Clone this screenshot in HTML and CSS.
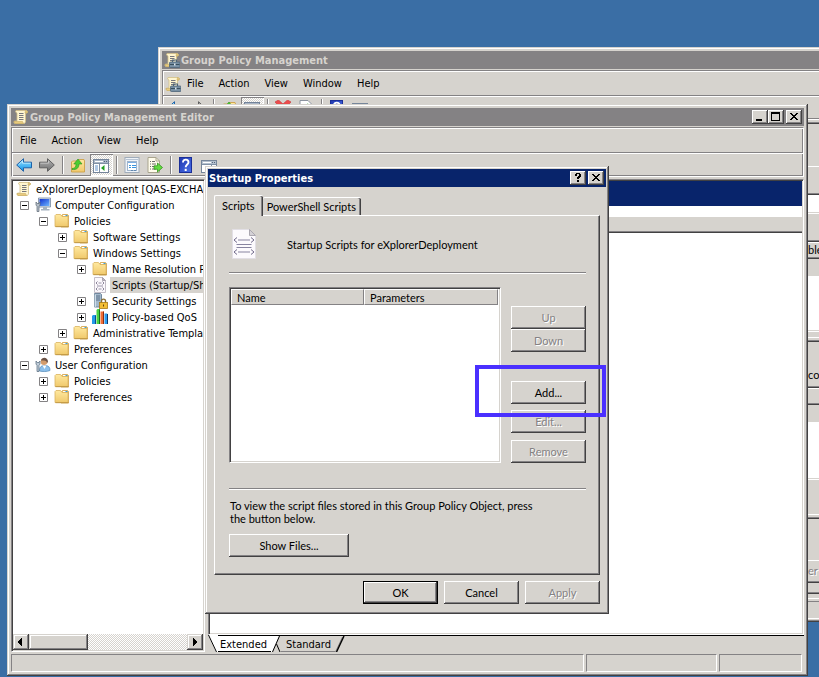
FILE: index.html
```html
<!DOCTYPE html>
<html lang="en">
<head>
<meta charset="utf-8">
<title>Group Policy Management Editor</title>
<link rel="stylesheet" href="styles.css">
</head>
<body>
<svg class="sprite" aria-hidden="true">
  <defs>
    <linearGradient id="gFolder" x1="0" y1="0" x2="0" y2="1"><stop offset="0" stop-color="#ffe9a0"/><stop offset="1" stop-color="#f0c96c"/></linearGradient>
    <linearGradient id="gHelp" x1="0" y1="0" x2="1" y2="1"><stop offset="0" stop-color="#2038b0"/><stop offset="1" stop-color="#4a70e8"/></linearGradient>
    <linearGradient id="gBlue" x1="0" y1="0" x2="0" y2="1"><stop offset="0" stop-color="#9be0ff"/><stop offset="1" stop-color="#0c96ea"/></linearGradient>
    <linearGradient id="gGrey" x1="0" y1="0" x2="0" y2="1"><stop offset="0" stop-color="#b4b4b4"/><stop offset="1" stop-color="#6e6e6e"/></linearGradient>
    <linearGradient id="gScreen" x1="0" y1="0" x2="1" y2="1"><stop offset="0" stop-color="#1030d0"/><stop offset="1" stop-color="#70b8ff"/></linearGradient>
  </defs>
  <symbol id="scroll" viewBox="0 0 16 16">
    <path d="M3 1.500h10.500l1 1-.5 1.500h-1.500V13l-1 1.500H2L.8 13.500l.7-1.500H4V4L2.500 3z" fill="#fff6d0" stroke="#d3c088" stroke-width=".8"/>
    <path d="M12.500 1.500l2 1-.5 1.500h-2zM1 12.500h8.500l1 2H2z" fill="#eacb80" stroke="#c8ac60" stroke-width=".6"/>
    <path d="M6 4.500h4.500M6 6.500h4.500M6 8.500h4.500M6 10.500h4.500" stroke="#77777c"/>
  </symbol>
  <symbol id="scrollcase" viewBox="0 0 16 16">
    <use href="#scroll"/>
    <path d="M8.500 10V8h4v2" fill="none" stroke="#4c6478" stroke-width="1.200"/>
    <rect x="5.500" y="10" width="10.500" height="5.500" rx=".8" fill="#7890a4" stroke="#4c6478" stroke-width=".8"/>
    <path d="M6 12.500h9.500" stroke="#38505f"/><path d="M10 11.500h1.500v2H10z" fill="#dce6ec"/>
  </symbol>
  <symbol id="back" viewBox="0 0 16 16"><path d="M.7 8L7.500 1.700v3.500h8v5.600h-8v3.500z" fill="url(#gBlue)" stroke="#1e62a8"/><path d="M2.500 7.800L6.500 4v2.200h8" fill="none" stroke="#c8f0ff" stroke-width=".8"/></symbol>
  <symbol id="fwd" viewBox="0 0 16 16"><path d="M15.300 8L8.500 1.700v3.500h-8v5.600h8v3.500z" fill="url(#gGrey)" stroke="#606060"/><path d="M1.500 6.200h8V4" fill="none" stroke="#ccc" stroke-width=".8"/></symbol>
  <symbol id="folder" viewBox="0 0 16 16">
    <path d="M7 3.500L8.500 1.500h5l1 1V14H7z" fill="#f0c868" stroke="#d0a24c" stroke-width=".8"/>
    <path d="M1 13.500v-11l1-1h4.500l1.500 2h6v10z" fill="url(#gFolder)" stroke="#d9b360" stroke-width=".8"/>
    <path d="M9 2.500h3" stroke="#fff"/><path d="M11.500 2.500h2" stroke="#3aa0e0"/>
    <path d="M1.500 13.700h13" stroke="#b88d38" stroke-width=".8"/>
  </symbol>
  <symbol id="upfolder" viewBox="0 0 16 16">
    <path d="M1.500 15V5l1-1h5l1-1.500h5.500l.5 1.500v11z" fill="url(#gFolder)" stroke="#cda048" stroke-width=".9"/>
    <path d="M2 11.500c3 0 4-1.500 4-4.500H3.800L8 2l4 5H9c0 4-2.500 6-7 5.500z" fill="#4ccc30" stroke="#2c9020" stroke-width=".6"/>
  </symbol>
  <symbol id="pane" viewBox="0 0 16 16">
    <rect x=".5" y="2.500" width="15" height="13" fill="#fff" stroke="#74849a"/><path d="M1 3h14v3H1z" fill="#aab6c6"/>
    <path d="M2 4.500h8" stroke="#fff"/><path d="M11 4.500h4" stroke="#54647c" stroke-dasharray="1 1"/><path d="M1 6.500h14M6.500 7v8" stroke="#8090a4"/>
    <path d="M2 9h3M2 11h3M2 13h3" stroke="#6090c8"/><path d="M11.500 8v6L8 11z" fill="#22a022"/>
  </symbol>
  <symbol id="props" viewBox="0 0 16 16">
    <rect x="1" y=".5" width="14" height="15" fill="#eef3f8" stroke="#a0acba"/><path d="M2 2.500h12" stroke="#b8c4d4"/>
    <rect x="3.500" y="4.500" width="9" height="9" fill="#fff" stroke="#a0b4cc"/><path d="M4 5.500h8" stroke="#7cb0e4"/><path d="M5 8.500h2M8 8.500h4M5 10.500h2M8 10.500h4" stroke="#3794e0"/><path d="M7 13.500h2M10 13.500h2" stroke="#6088b0"/>
  </symbol>
  <symbol id="export" viewBox="0 0 16 16">
    <path d="M1 .5h8l3.500 3.500v11.500H1z" fill="#fffceb" stroke="#a9a48e"/><path d="M9 .5V4h3.500" fill="none" stroke="#a9a48e"/>
    <path d="M3 4.500h1M5 4.500h3M3 7h1M5 7h4M3 9.500h1M5 9.500h3M3 12h1M5 12h4" stroke="#6c6c6c"/>
    <path d="M7 8.800h3.500V6l5 4.500-5 4.500v-2.800H7z" fill="#62dc40" stroke="#35901f" stroke-width=".8"/>
  </symbol>
  <symbol id="help" viewBox="0 0 16 16"><rect x="1.500" y=".5" width="12" height="15" fill="url(#gHelp)" stroke="#1b2f98"/><path d="M5 5.500C5 1.500 10.500 2 10.500 5.200 10.500 7.500 7.700 7.600 7.700 10.300" fill="none" stroke="#fff" stroke-width="1.900"/><path d="M6.700 11.800h2V14h-2z" fill="#fff"/></symbol>
  <symbol id="win" viewBox="0 0 16 16"><rect x=".5" y="3.500" width="15" height="12" fill="#fff" stroke="#76869a"/><path d="M1 4h14v3H1z" fill="#b4c0ce"/><path d="M2 5.500h8" stroke="#fff"/><path d="M11 5.500h4" stroke="#54647c" stroke-dasharray="1 1"/><path d="M1 7.500h14M10.500 8v7" stroke="#8090a4"/><path d="M12 9.500h2M12 11.500h2M12 13.500h2" stroke="#6090c8"/></symbol>
  <symbol id="del" viewBox="0 0 16 16"><path d="M0 2l3.500-2L8 4l4.500-4L16 2l-5 5.500L15.500 13l-3 2L8 10.500 3.500 15l-3-2L5 7.500z" fill="#ec4c4c" stroke="#c84040" stroke-width=".7"/></symbol>
  <symbol id="refresh" viewBox="0 0 16 16"><path d="M2 .5h8l3.500 3.500v11.500H2z" fill="#fff" stroke="#8c94a0"/><path d="M4.500 8c0-3 3-4.500 5-3V3l3 3.500-4.500 1.500V7C6.500 6 6 7 6 9z" fill="#44b83a"/></symbol>
  <symbol id="computer" viewBox="0 0 16 16">
    <path d="M3.500 1h12v9h-12z" fill="#dfe6ee" stroke="#7488a0" stroke-width=".8"/><path d="M4.500 2h10v7h-10z" fill="url(#gScreen)"/><path d="M8 10h4v2h2.500v1.500H6V12h2z" fill="#a5b2c0"/>
    <path d="M1 5v3l1 1.500v5h2v-5L5 8V5L4 6.500H2.200z" fill="#b4bec8" stroke="#5c6874" stroke-width=".7"/>
  </symbol>
  <symbol id="user" viewBox="0 0 16 16">
    <path d="M4.500 14c0-4.500 2-5.500 5.500-5.500s5 1.500 5 5c-3 1.300-7.500 1.300-10.500.5z" fill="#8cc0ec" stroke="#5088b8" stroke-width=".7"/><path d="M7.500 8.500L9.500 12l2-3.500z" fill="#fff"/>
    <circle cx="9" cy="4.700" r="3.300" fill="#d39c6c"/><path d="M6 3.500C6.500 0 12.500-.5 13 4.500l-1 2c0-2-1-3-3-3z" fill="#6c5448"/>
    <path d="M1 4v3l1 1.500v6h2V8.500L5 7V4L4 5.500H2.200z" fill="#c0ccd8" stroke="#53687c" stroke-width=".7"/>
  </symbol>
  <symbol id="script" viewBox="0 0 24 30">
    <path d="M.5.500h17l6 6v23H.5z" fill="#fcfafd" stroke="#e2dfe5"/><path d="M17.500.500v6h6z" fill="#d4d1d6" stroke="#aaa7b0"/>
    <path d="M6 11h12M6 23h12" stroke="#8884a0"/><path d="M5 8.500L2 11l3 2.500M19 8.500l3 2.500-3 2.500M5 20.500L2 23l3 2.500M19 20.500l3 2.500-3 2.500" fill="none" stroke="#716b8b"/>
    <path d="M4.500 15.500h15M4.500 18.500h15" stroke="#8884a0"/>
  </symbol>
  <symbol id="scriptsm" viewBox="0 0 16 16">
    <path d="M2.500.500h8l3 3v12h-11z" fill="#fbf8fc" stroke="#c4bec8"/><path d="M10.500.500v3h3z" fill="#bbb6c0" stroke="#a9a3ae"/>
    <path d="M6.500 6h3M6.500 12h3M5 9h6" stroke="#9a94a8"/><path d="M5.500 4.500L4 6l1.500 1.500M10.500 4.500L12 6l-1.500 1.500M5.500 10.500L4 12l1.500 1.500M10.500 10.500L12 12l-1.500 1.500" fill="none" stroke="#7f788f" stroke-width=".9"/>
  </symbol>
  <symbol id="security" viewBox="0 0 16 16">
    <path d="M2.500.500h6l1 1V14h-7z" fill="#a3b8cb" stroke="#667f96" stroke-width=".9"/><path d="M4 3h4M4 5h4M4 7h4" stroke="#5a7088"/><path d="M3.200 1.500V14" stroke="#e3edf5"/>
    <path d="M9.500 10V8c0-2.500 4-2.500 4 0v2" fill="none" stroke="#8c7030" stroke-width="1.400"/><rect x="7.500" y="9.500" width="8" height="6" fill="#f3bd32" stroke="#a87916" stroke-width=".8"/><path d="M11 11.500h1v2h-1z" fill="#60420a"/>
  </symbol>
  <symbol id="qos" viewBox="0 0 16 16">
    <path d="M0 7l1-1h3v9H0z" fill="#239be8"/><path d="M3 6.500h1V15H3z" fill="#0a4a90"/><path d="M4.500 1l1-1H8v15H4.500z" fill="#49d344"/><path d="M7 .5h1V15H7z" fill="#157024"/><path d="M8.500 2.500H12V15H8.500z" fill="#ee6c35"/><path d="M11 2.500h1V15h-1z" fill="#8b2b13"/><path d="M12.500 4.500H15l1 1V15h-3.500z" fill="#2a9cf0"/><path d="M15 5h1v10h-1z" fill="#0a3a70"/>
  </symbol>
  <symbol id="plus" viewBox="0 0 9 9"><path d="M.5.500h8v8h-8z" fill="#fff" stroke="#848284"/><path d="M2 4.500h5M4.500 2v5" stroke="#000"/></symbol>
  <symbol id="minus" viewBox="0 0 9 9"><path d="M.5.500h8v8h-8z" fill="#fff" stroke="#848284"/><path d="M2 4.500h5" stroke="#000"/></symbol>
  <symbol id="close" viewBox="0 0 12 10"><path d="M2 1h2v1h1v1h2V2h1V1h2v1H9v1H8v1H7v1h1v1h1v1h1v1H8V7H7V6H5v1H4v1H2V7h1V6h1V5h1V4H4V3H3V2H2z" fill="#000"/></symbol>
</svg>

<main class="desktop">
  <section class="window console" aria-label="Group Policy Management">
    <header class="titlebar"><svg class="ic"><use href="#scrollcase"/></svg><h2>Group Policy Management</h2></header>
    <div class="bars">
      <nav class="menu"><svg class="ic"><use href="#scrollcase"/></svg><button>File</button><button>Action</button><button>View</button><button>Window</button><button>Help</button></nav>
      <div class="toolbar">
        <button aria-label="Back"><svg class="ic"><use href="#back"/></svg></button><button aria-label="Forward"><svg class="ic"><use href="#fwd"/></svg></button><span class="sep"></span>
        <button aria-label="Up"><svg class="ic"><use href="#upfolder"/></svg></button><button class="pressed" aria-label="Show tree"><svg class="ic"><use href="#pane"/></svg></button><span class="sep"></span>
        <button aria-label="Delete"><svg class="ic"><use href="#del"/></svg></button><button aria-label="Refresh"><svg class="ic"><use href="#refresh"/></svg></button><span class="sep"></span>
        <button aria-label="Help"><svg class="ic"><use href="#help"/></svg></button><button aria-label="New window"><svg class="ic"><use href="#win"/></svg></button>
      </div>
    </div>
    <div class="results">
      <i class="dk"></i><i></i><i class="lt"></i><i></i><i class="dk"></i><i class="paper"></i><i></i><i class="lt"></i><i></i>
      <i class="dk"></i><i class="lt"></i><span>ble</span><i class="dk"></i><i></i><i class="paper"></i><i></i><i class="lt"></i><i></i><i class="lt"></i><i></i>
      <i class="dk"></i><i></i><span>cor</span><i class="dk"></i><i class="lt"></i><i></i><i class="dk"></i><i></i><i class="paper"></i><i></i><i class="lt"></i><i></i><i class="lt"></i><i></i>
      <i class="dk"></i><i></i><i class="lt"></i><span class="off">er</span><i class="dk"></i><i></i><i class="dk"></i><i></i><i class="lt"></i><i></i><i class="gr"></i><i></i><i class="lt"></i>
    </div>
  </section>

  <section class="window editor" aria-label="Group Policy Management Editor">
    <header class="titlebar"><svg class="ic"><use href="#scroll"/></svg><h2>Group Policy Management Editor</h2>
      <span class="caption">
        <button aria-label="Minimize"><svg viewBox="0 0 12 10"><path d="M2 7h6v2H2z"/></svg></button><button aria-label="Maximize"><svg viewBox="0 0 12 10"><path d="M1 0h9v9H1zM2 2v6h7V2z" fill-rule="evenodd"/></svg></button>
        <button class="x" aria-label="Close"><svg><use href="#close"/></svg></button>
      </span>
    </header>
    <div class="bars">
      <nav class="menu"><button>File</button><button>Action</button><button>View</button><button>Help</button></nav>
      <div class="toolbar">
        <button aria-label="Back"><svg class="ic"><use href="#back"/></svg></button><button aria-label="Forward"><svg class="ic"><use href="#fwd"/></svg></button><span class="sep"></span>
        <button aria-label="Up"><svg class="ic"><use href="#upfolder"/></svg></button><button class="pressed" aria-label="Show tree"><svg class="ic"><use href="#pane"/></svg></button><span class="sep"></span>
        <button aria-label="Properties"><svg class="ic"><use href="#props"/></svg></button><button aria-label="Export"><svg class="ic"><use href="#export"/></svg></button><span class="sep"></span>
        <button aria-label="Help"><svg class="ic"><use href="#help"/></svg></button><button aria-label="New window"><svg class="ic"><use href="#win"/></svg></button>
      </div>
    </div>
    <div class="panes">
      <div class="treepane">
        <ul class="tree">
          <li><div class="row root"><svg class="ic"><use href="#scroll"/></svg><span>eXplorerDeployment [QAS-EXCHANGE]</span></div></li>
          <li><div class="row"><svg class="ex"><use href="#minus"/></svg><svg class="ic"><use href="#computer"/></svg><span>Computer Configuration</span></div>
            <ul>
              <li><div class="row"><svg class="ex"><use href="#minus"/></svg><svg class="ic"><use href="#folder"/></svg><span>Policies</span></div>
                <ul>
                  <li><div class="row"><svg class="ex"><use href="#plus"/></svg><svg class="ic"><use href="#folder"/></svg><span>Software Settings</span></div></li>
                  <li><div class="row"><svg class="ex"><use href="#minus"/></svg><svg class="ic"><use href="#folder"/></svg><span>Windows Settings</span></div>
                    <ul>
                      <li><div class="row"><svg class="ex"><use href="#plus"/></svg><svg class="ic"><use href="#folder"/></svg><span>Name Resolution Policy</span></div></li>
                      <li><div class="row picked"><svg class="ex"></svg><svg class="ic"><use href="#scriptsm"/></svg><span>Scripts (Startup/Shutdown)</span></div></li>
                      <li><div class="row"><svg class="ex"><use href="#plus"/></svg><svg class="ic"><use href="#security"/></svg><span>Security Settings</span></div></li>
                      <li><div class="row"><svg class="ex"><use href="#plus"/></svg><svg class="ic"><use href="#qos"/></svg><span>Policy-based QoS</span></div></li>
                    </ul></li>
                  <li><div class="row"><svg class="ex"><use href="#plus"/></svg><svg class="ic"><use href="#folder"/></svg><span>Administrative Templates</span></div></li>
                </ul></li>
              <li><div class="row"><svg class="ex"><use href="#plus"/></svg><svg class="ic"><use href="#folder"/></svg><span>Preferences</span></div></li>
            </ul></li>
          <li><div class="row"><svg class="ex"><use href="#minus"/></svg><svg class="ic"><use href="#user"/></svg><span>User Configuration</span></div>
            <ul>
              <li><div class="row"><svg class="ex"><use href="#plus"/></svg><svg class="ic"><use href="#folder"/></svg><span>Policies</span></div></li>
              <li><div class="row"><svg class="ex"><use href="#plus"/></svg><svg class="ic"><use href="#folder"/></svg><span>Preferences</span></div></li>
            </ul></li>
        </ul>
        <div class="scroll">
          <button aria-label="Scroll left"><svg viewBox="0 0 12 12"><path d="M7 2v8H6V9H5V8H4V7H3V5h1V4h1V3h1V2z"/></svg></button><span class="thumb"></span><span class="track"></span><button aria-label="Scroll right"><svg viewBox="0 0 12 12"><path d="M4 2v8h1V9h1V8h1V7h1V5H7V4H6V3H5V2z"/></svg></button>
        </div>
      </div>
      <div class="detail">
        <div class="sheet"><div class="band"></div><div class="heads"></div></div>
        <div class="views">
          <svg class="slant first" viewBox="0 0 10 17"><path d="M0 0h10v17H8z" fill="#fff"/><path d="M.5 0L8.500 17" stroke="#000"/></svg>
          <button class="on">Extended</button>
          <svg class="slant" viewBox="0 0 10 16"><path d="M0 0h8L1 16H0z" fill="#fff"/><path d="M8.500 0l-7 16M5.500 8l3.500 8" stroke="#000" fill="none"/></svg>
          <button class="other">Standard</button>
          <svg class="slant" viewBox="0 0 10 16"><path d="M7.500 1L.5 16" stroke="#848284"/><path d="M9 0L1.500 16" stroke="#000" stroke-width="1.400"/></svg>
        </div>
      </div>
    </div>
    <footer class="status"><span></span><span></span><span></span></footer>
  </section>

  <section class="window dialog" role="dialog" aria-label="Startup Properties">
    <header class="titlebar active"><h2>Startup Properties</h2>
      <span class="caption">
        <button aria-label="Help"><svg viewBox="0 0 12 10"><path d="M3 1h1V0h4v1h1v3H8v1H7v1H5V4h1V3h1V1H5v2H3zM5 7h2v2H5z"/></svg></button>
        <button class="x" aria-label="Close"><svg><use href="#close"/></svg></button>
      </span>
    </header>
    <div class="body">
      <div class="tabs"><button class="tab on">Scripts</button><button class="tab">PowerShell Scripts</button></div>
      <div class="page">
        <div class="intro"><svg class="big"><use href="#script"/></svg><span>Startup Scripts for eXplorerDeployment</span></div>
        <hr>
        <div class="pick">
          <div class="list"><table><thead><tr><th>Name</th><th>Parameters</th></tr></thead></table></div>
          <div class="side">
            <button class="btn" disabled>Up</button><button class="btn" disabled>Down</button>
            <div class="marked"><button class="btn">Add...</button><span class="marker"></span></div>
            <button class="btn edit" disabled>Edit...</button><button class="btn remove" disabled>Remove</button>
          </div>
        </div>
        <hr>
        <p>To view the script files stored in this Group Policy Object, press<br>the button below.</p>
        <button class="btn wide">Show Files...</button>
      </div>
      <div class="actions"><button class="btn default">OK</button><button class="btn">Cancel</button><button class="btn" disabled>Apply</button></div>
    </div>
  </section>
</main>
</body>
</html>
```
FILE: styles.css
```css
:root {
  --face: #d6d3ce;
  --gray: #848284;
  --dark: #424142;
  --ui: "DejaVu Sans Condensed", "DejaVu Sans", sans-serif;
  --dlg: Lato, "Liberation Sans", Arial, sans-serif;
}
* { box-sizing: border-box; }
body { margin: 0; }
.sprite { position: absolute; width: 0; height: 0; }
svg { display: block; flex: none; }
.ic { width: 16px; height: 16px; }
button { font: inherit; color: inherit; background: none; border: 0; padding: 0; margin: 0; }
ul { list-style: none; margin: 0; padding: 0; }
h2, p { margin: 0; }

.desktop { position: relative; height: 100vh; overflow: hidden; background: #3a6ea5; font: 11px/16px var(--ui); color: #000; }

.window {
  position: absolute; display: flex; flex-direction: column; background: var(--face); padding: 4px;
  box-shadow: inset -1px -1px var(--dark), inset 1px 1px var(--face), inset -2px -2px var(--gray), inset 2px 2px #fff;
}
.console { left: 158px; right: -12px; top: 47px; }
.editor { left: 7px; right: 11px; top: 104px; bottom: 1px; }
.dialog { left: 205px; top: 166px; width: 404px; padding: 3px; font-family: var(--dlg); }

.titlebar { display: flex; align-items: center; height: 18px; padding: 0 2px; gap: 1px; background: var(--gray); color: var(--face); }
.titlebar h2 { flex: 1; padding-top: 2px; font: bold 11px/16px var(--ui); }
.titlebar.active { padding-left: 1px; background: #08246b; color: #fff; }
.caption { display: flex; }
.caption button { width: 16px; height: 14px; padding: 2px; background: var(--face); box-shadow: inset -1px -1px var(--dark), inset 1px 1px #fff, inset -2px -2px var(--gray); }
.caption svg { width: 12px; height: 10px; }
.caption .x { margin-left: 2px; }

.bars { margin-top: 1px; border: 1px solid var(--gray); border-right-color: #fff; border-bottom-color: #fff; box-shadow: inset 1px 1px #fff, inset -1px -1px var(--gray); }
.menu { display: flex; align-items: center; height: 25px; padding: 1px 1px 0; border-bottom: 1px solid var(--gray); }
.menu button { padding: 0 8px 0 7px; }
.menu .ic { margin: 0 -1px 0 1px; }
.toolbar { display: flex; align-items: center; height: 23px; padding-left: 1px; border-top: 1px solid #fff; }
.toolbar button { width: 23px; height: 22px; padding: 0 3px; }
.toolbar .pressed { box-shadow: inset 1px 1px var(--gray), inset -1px -1px #fff; background: repeating-conic-gradient(#fff 0 25%, var(--face) 0 50%) 0 0 / 2px 2px; }
.sep { width: 2px; height: 18px; margin: 0 3px; background: linear-gradient(90deg, var(--gray) 50%, #fff 50%); }

.results {
  display: grid; margin: 2px 0 -1px 646px; font-family: var(--dlg);
  grid-template-rows:
    2px 42px 1px 26px 2px 17px 1px 1px 26px
    2px 1px 14px 2px 17px 54px 1px 1px 5px 1px 2px
    2px 22px 22px 2px 1px 14px 2px 17px 56px 1px 1px 34px 1px 2px
    2px 41px 1px 20px 2px 9px 2px 4px 1px 2px 1px 16px 1px;
}
.results span { align-self: center; white-space: nowrap; }
.dk { background: linear-gradient(var(--gray) 50%, var(--dark) 50%); }
.lt, .paper { background: #fff; }
.gr { background: var(--gray); }
.off, .btn:disabled { color: var(--gray); text-shadow: 1px 1px #fff; }

.panes { flex: 1; min-height: 0; display: flex; gap: 3px; margin-top: 2px; }
.treepane, .list, .sheet {
  background: #fff; border: 1px solid var(--gray); border-right-color: #fff; border-bottom-color: #fff;
}
.treepane { flex: none; width: 194px; padding: 1px; display: flex; flex-direction: column; box-shadow: inset 1px 1px var(--dark), inset -1px -1px var(--face); }
.tree { flex: 1; overflow: hidden; }
.tree ul { padding-left: 19px; }
.row { display: flex; align-items: center; height: 16px; padding-left: 7px; white-space: nowrap; }
.row.root { padding-left: 3px; }
.row span { padding: 2px 2px 0; margin-left: 2px; line-height: 14px; }
.ex { width: 9px; height: 9px; margin-right: 6px; }
.picked span { background: var(--face); }
.scroll { display: flex; height: 16px; background: repeating-conic-gradient(#fff 0 25%, var(--face) 0 50%) 0 0 / 2px 2px; }
.scroll button, .thumb { width: 16px; padding: 2px; background: var(--face); box-shadow: inset -1px -1px var(--dark), inset 1px 1px var(--face), inset -2px -2px var(--gray), inset 2px 2px #fff; }
.scroll svg { width: 12px; height: 12px; }
.scroll .thumb { width: 59px; }
.track { flex: 1; }

.detail { flex: 1; display: flex; flex-direction: column; }
.sheet { flex: 1; padding: 1px; box-shadow: inset 1px 1px var(--dark), inset -1px -1px var(--face); }
.band { height: 25px; background: #08246b; }
.heads { height: 27px; border-top: 11px solid #fff; background: var(--face); box-shadow: inset 0 -1px var(--dark), inset 0 -2px var(--gray); }
.views { display: flex; height: 17px; border-top: 1px solid #000; }
.views button { padding: 2px 4px 0 2px; line-height: 14px; box-shadow: inset 0 -1px var(--gray); }
.views .on { background: #fff; box-shadow: inset 0 -1px #000; }
.views .other { padding-left: 5px; }
.slant { width: 10px; height: 16px; }
.slant.first { margin-top: -1px; height: 17px; }

.status { display: flex; gap: 2px; height: 18px; margin-top: 2px; }
.status span { border: 1px solid var(--gray); border-right-color: #fff; border-bottom-color: #fff; width: 83px; margin-right: 2px; }
.status span:first-child { flex: 1; }
.status span:nth-child(2) { width: 131px; margin-right: 0; }
.status span:first-child { margin-right: 0; }

.body { padding: 8px 6px 7px; line-height: 13px; }
.tabs { display: flex; align-items: flex-end; }
.tab { height: 18px; padding: 0 5px 0 4px; border: 1px solid #fff; border-width: 1px 0 0; border-radius: 2px 2px 0 0; box-shadow: inset -1px 0 var(--dark), inset -2px 0 var(--gray); }
.tab.on { position: relative; height: 21px; margin-bottom: -1px; padding: 0 8px 2px 7px; border-left-width: 1px; background: var(--face); }
.page { padding: 12px 13px 17px 14px; border: 1px solid #fff; border-right-color: var(--dark); border-bottom-color: var(--dark); box-shadow: inset -1px -1px var(--gray); }
.intro { display: flex; align-items: center; gap: 31px; padding-left: 3px; height: 32px; }
.big { width: 24px; height: 30px; }
hr { height: 2px; margin: 12px 0 0; border: 0; background: linear-gradient(var(--gray) 50%, #fff 50%); }
.pick { display: flex; justify-content: space-between; margin: 13px 0 25px; }
.list { width: 272px; height: 176px; padding: 1px; box-shadow: inset 1px 1px var(--dark), inset -1px -1px var(--face); }
.list table { width: 267px; border-collapse: separate; border-spacing: 0; }
.list th { height: 16px; padding: 1px 5px 0; text-align: left; font-weight: normal; line-height: 13px; background: var(--face); border: 1px solid var(--gray); border-left-color: #fff; border-top-color: #fff; }
.list th:first-child { width: 133px; }
.side { display: flex; flex-direction: column; padding-top: 19px; }
.btn { flex: none; display: block; width: 75px; height: 23px; line-height: 19px; text-align: center; background: var(--face); box-shadow: inset -1px -1px var(--dark), inset 1px 1px #fff, inset -2px -2px var(--gray); }
.btn.default { border: 1px solid #000; line-height: 17px; }
.btn.wide { width: 120px; }
.marked { position: relative; margin-top: 29px; }
.marker { position: absolute; left: -36px; top: -16px; width: 131px; height: 52px; border: 4px solid #4a30ff; pointer-events: none; }
.edit { margin-top: 6px; }
.remove { margin-top: 7px; }
.page hr + p { margin: 9px 0; padding-left: 1px; }
.actions { display: flex; justify-content: flex-end; gap: 6px; padding-top: 6px; }
```
